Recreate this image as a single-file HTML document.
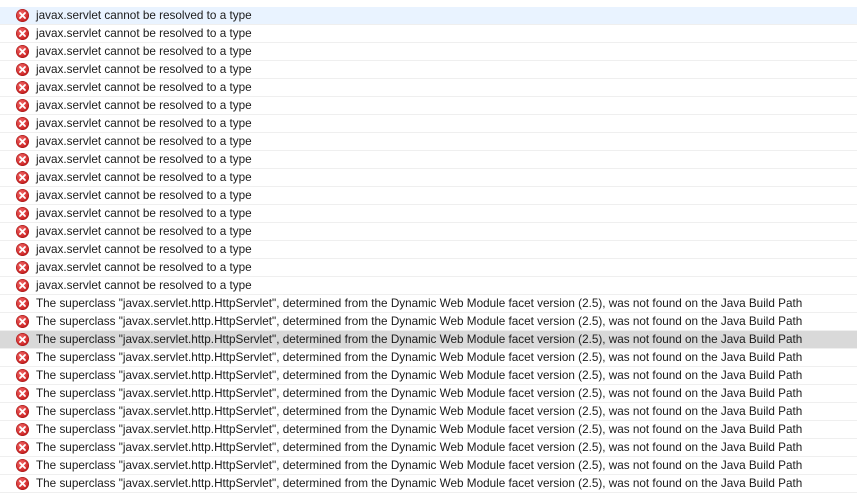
<!DOCTYPE html>
<html><head><meta charset="utf-8"><style>
html,body{margin:0;padding:0;background:#fff;width:857px;height:502px;overflow:hidden}
body{font-family:"Liberation Sans",sans-serif;font-size:11.73px;color:#1b1b1b}
.list{position:absolute;top:7px;left:0;width:857px}
.r{height:17px;border-bottom:1px solid #efefef;position:relative;white-space:nowrap}
.r.sel{background:#e9f3ff}
.r.hl{background:#d9d9d9}
.r svg{position:absolute;left:16px;top:2px}
.r span{position:absolute;left:36px;top:1px;line-height:15px}
</style></head><body>
<div class="list" id="l"></div>
<script>
var ic='<svg width="13" height="13" viewBox="0 0 13 13"><defs><radialGradient id="g" cx="40%" cy="35%" r="65%"><stop offset="0" stop-color="#f36a6a"/><stop offset="1" stop-color="#c81e1e"/></radialGradient></defs><circle cx="6.5" cy="6.5" r="6.2" fill="url(#g)" stroke="#a81818" stroke-width="0.6"/><path d="M4 4L9 9M9 4L4 9" stroke="#fff" stroke-width="1.8" stroke-linecap="round"/></svg>';
var a="javax.servlet cannot be resolved to a type";
var b='The superclass "javax.servlet.http.HttpServlet", determined from the Dynamic Web Module facet version (2.5), was not found on the Java Build Path';
var h="";
for(var i=0;i<27;i++){var c=i==0?"r sel":(i==18?"r hl":"r");h+='<div class="'+c+'">'+ic+'<span>'+(i<16?a:b.replace(/"/g,'&quot;'))+'</span></div>';}
document.getElementById("l").innerHTML=h;
</script>
</body></html>
